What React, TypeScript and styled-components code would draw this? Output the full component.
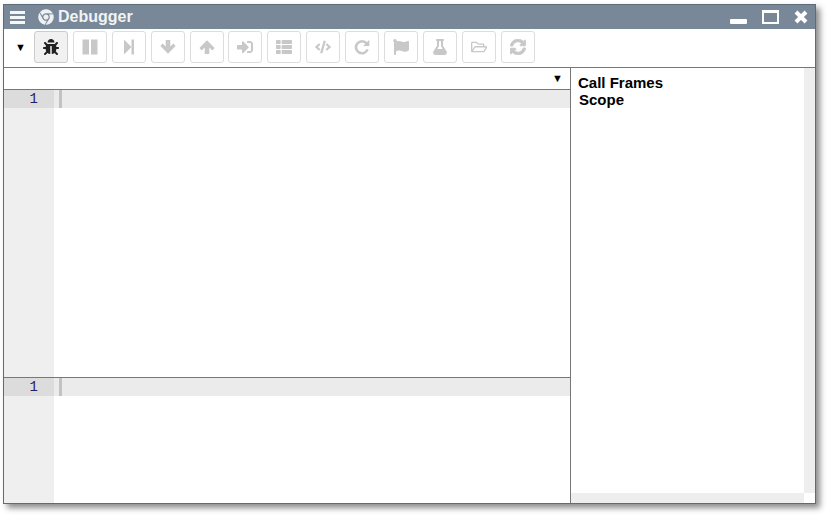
import React from "react";
import styled, { createGlobalStyle } from "styled-components";
import { FaBug, FaChrome, FaCode, FaFlag, FaFlask, FaRegFolderOpen, FaSignInAlt, FaSyncAlt, FaThList } from "react-icons/fa";

const Global = createGlobalStyle`
  html, body { margin: 0; padding: 0; background: #fff; overflow: hidden; }
  body { font-family: "Liberation Sans", Arial, sans-serif; }
`;
const Page = styled.div`
  width: 828px;
  height: 517px;
  padding: 4px 0 0 3px;
  box-sizing: border-box;
`;
const Window = styled.div`
  width: 813px;
  height: 500px;
  box-sizing: border-box;
  border: 1px solid #5e6b78;
  box-shadow: 4px 4px 6px rgba(0, 0, 0, 0.45);
  background: #fff;
  display: flex;
  flex-direction: column;
`;
const TitleBar = styled.div`
  height: 24px;
  flex: none;
  background: #788899;
  color: #fff;
  display: flex;
  align-items: center;
  padding: 0 7px 0 6px;
`;
const MenuSvg = styled.svg`
  width: 15px;
  height: 13px;
  margin-right: 13px;
  fill: #f4f6f7;
`;
const Logo = styled(FaChrome)`
  width: 16px;
  height: 16px;
  margin-right: 4px;
  color: #eef0f2;
`;
const Title = styled.span`
  font-size: 16px;
  font-weight: bold;
  color: #f1f3f5;
  flex: 1;
`;
const Controls = styled.div`
  display: flex;
  align-items: center;
  gap: 15px;
`;
const MinimizeIcon = styled.i`
  display: block;
  width: 17px;
  height: 5px;
  margin-top: 9px;
  background: #fff;
  border-radius: 1px;
`;
const MaximizeIcon = styled.i`
  display: block;
  box-sizing: border-box;
  width: 17px;
  height: 14px;
  border: 2px solid #fff;
  border-top-width: 3px;
`;
const CloseSvg = styled.svg`
  width: 14px;
  height: 14px;
  stroke: #fff;
  stroke-width: 4;
  fill: none;
`;
const Toolbar = styled.div`
  height: 39px;
  flex: none;
  box-sizing: border-box;
  border-bottom: 1px solid #777;
  display: flex;
  align-items: center;
  gap: 4.92px;
  padding: 0 0 2px 11px;
`;
const ToolMenu = styled.span`
  width: 14px;
  font-size: 11px;
  color: #000;
  line-height: 1;
`;
const ToolButton = styled.button<{ $active?: boolean }>`
  width: 34px;
  height: 32px;
  padding: 0;
  box-sizing: border-box;
  border: 1px solid ${(p) => (p.$active ? "#ccc" : "#ddd")};
  border-radius: 3px;
  background: ${(p) => (p.$active ? "#f1f1f1" : "#fff")};
  color: ${(p) => (p.$active ? "#222" : "#c8c8c8")};
  display: flex;
  align-items: center;
  justify-content: center;
  font-size: 16px;
`;
const GlyphSvg = styled.svg`
  width: 16px;
  height: 16px;
  fill: currentColor;
  stroke: currentColor;
`;
const BoldSync = styled(FaSyncAlt)`
  stroke: currentColor;
  stroke-width: 30;
`;
const Body = styled.div`
  flex: 1;
  min-height: 0;
  display: flex;
`;
const LeftPane = styled.div`
  width: 566px;
  flex: none;
  display: flex;
  flex-direction: column;
  border-right: 1px solid #777;
`;
const FileBar = styled.div`
  height: 22px;
  flex: none;
  box-sizing: border-box;
  border-bottom: 1px solid #777;
  display: flex;
  justify-content: flex-end;
  padding: 5px 7px 0 0;
  font-size: 11px;
  line-height: 1;
  color: #000;
`;
const Editor = styled.div<{ $height: number }>`
  height: ${(p) => p.$height}px;
  flex: none;
  box-sizing: border-box;
  display: flex;
  flex-direction: column;
  background: linear-gradient(to right, #efefef 50px, #fff 50px);
`;
const Divider = styled.div`
  height: 1px;
  flex: none;
  background: #777;
`;
const ActiveLine = styled.div`
  height: 18px;
  display: flex;
  background: #ebebeb;
`;
const LineNumber = styled.span`
  width: 50px;
  box-sizing: border-box;
  padding-right: 16px;
  background: #dcdcdc;
  text-align: right;
  font: 14px/19px "Liberation Mono", monospace;
  color: #20206a;
`;
const Cursor = styled.span`
  width: 3px;
  margin-left: 5px;
  background: #c2c2c2;
`;
const RightPane = styled.div`
  flex: 1;
  min-width: 0;
  display: grid;
  grid-template-columns: 1fr 11px;
  grid-template-rows: 1fr 10px;
`;
const Frames = styled.div`
  padding: 6px 0 0 7px;
  font-size: 15px;
  line-height: 17px;
  font-weight: bold;
  color: #000;
`;
const FrameLabel = styled.div<{ $shift?: boolean }>`
  padding-left: ${(p) => (p.$shift ? "1px" : "0")};
`;
const ScrollV = styled.div`
  background: #eee;
`;
const ScrollH = styled.div`
  background: #eee;
`;

const Glyph = ({ children }: { children: React.ReactNode }) => (
  <GlyphSvg viewBox="0 0 16 16">{children}</GlyphSvg>
);
const PauseIcon = () => (
  <Glyph>
    <rect x="0.5" y="0.5" width="6.5" height="15" stroke="none" />
    <rect x="9" y="0.5" width="6.5" height="15" stroke="none" />
  </Glyph>
);
const StepIcon = () => (
  <Glyph>
    <path d="M3 0.5 L10.5 8 L3 15.5 Z" stroke="none" />
    <rect x="10.5" y="0.5" width="2.5" height="15" stroke="none" />
  </Glyph>
);
const DownIcon = () => (
  <Glyph>
    <path d="M5.7 1 H10.3 V7.5 L13.4 4.6 L15.6 7 L8 14.8 L0.4 7 L2.6 4.6 L5.7 7.5 Z" stroke="none" />
  </Glyph>
);
const UpIcon = () => (
  <Glyph>
    <path d="M5.7 15 H10.3 V8.5 L13.4 11.4 L15.6 9 L8 1.2 L0.4 9 L2.6 11.4 L5.7 8.5 Z" stroke="none" />
  </Glyph>
);
const RepeatIcon = () => (
  <Glyph>
    <path d="M12.6 4.4 A6 6 0 1 0 13.6 10.4" fill="none" strokeWidth="2.6" />
    <path d="M15.4 0.8 V7 H9.2 Z" stroke="none" />
  </Glyph>
);

const tools = [PauseIcon, StepIcon, DownIcon, UpIcon, FaSignInAlt, FaThList, FaCode, RepeatIcon, FaFlag, FaFlask, FaRegFolderOpen, BoldSync];

export default function App() {
  return (
    <Page>
      <Global />
      <Window>
        <TitleBar>
          <MenuSvg viewBox="0 0 15 13">
            <rect y="0" width="15" height="3" />
            <rect y="5" width="15" height="3" />
            <rect y="10" width="15" height="3" />
          </MenuSvg>
          <Logo />
          <Title>Debugger</Title>
          <Controls>
            <MinimizeIcon />
            <MaximizeIcon />
            <CloseSvg viewBox="0 0 14 14">
              <path d="M2 2 L12 12 M12 2 L2 12" />
            </CloseSvg>
          </Controls>
        </TitleBar>
        <Toolbar>
          <ToolMenu>▼</ToolMenu>
          <ToolButton $active><FaBug /></ToolButton>
          {tools.map((Icon, i) => (
            <ToolButton key={i}><Icon /></ToolButton>
          ))}
        </Toolbar>
        <Body>
          <LeftPane>
            <FileBar>▼</FileBar>
            <Editor $height={287}>
              <ActiveLine><LineNumber>1</LineNumber><Cursor /></ActiveLine>
            </Editor>
            <Divider />
            <Editor $height={125}>
              <ActiveLine><LineNumber>1</LineNumber><Cursor /></ActiveLine>
            </Editor>
          </LeftPane>
          <RightPane>
            <Frames>
              <FrameLabel>Call Frames</FrameLabel>
              <FrameLabel $shift>Scope</FrameLabel>
            </Frames>
            <ScrollV />
            <ScrollH />
          </RightPane>
        </Body>
      </Window>
    </Page>
  );
}
